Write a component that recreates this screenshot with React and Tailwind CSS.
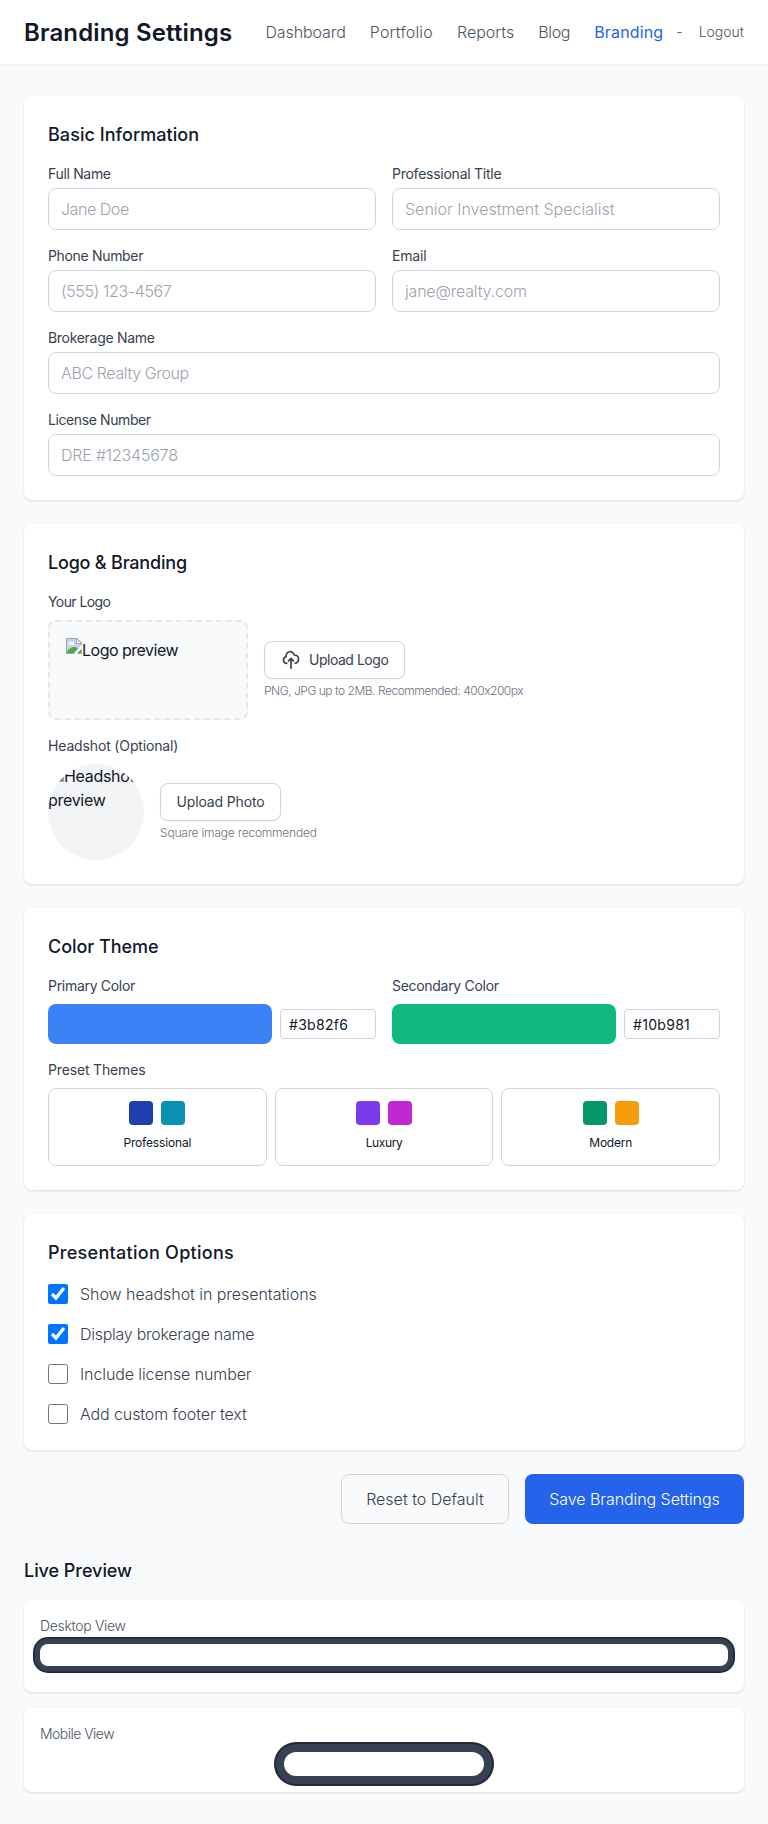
import React from 'react';

const field =
  "block w-full h-[42px] rounded-lg border border-[#d1d5db] bg-white px-3 text-base font-[350] text-[#111827] placeholder:text-[#9ca3af] outline-none";

function BrokenImage({ className }) {
  return (
    <svg viewBox="0 0 16 16" className={className} aria-hidden="true">
      <path d="M0.5 0.5H11L15.5 5V15.5H0.5Z" fill="#c4d4f7" stroke="#a3a3a3" />
      <path d="M2.5 6.5a1.6 1.6 0 0 1 1.4-1.9a1.7 1.7 0 0 1 3.1 0a1.2 1.2 0 0 1 .9 1.9Z" fill="#fff" />
      <path d="M1 15V13.6C3 10.600 5.500 9 8 9C9.800 9 11 9.700 11.800 10.600L8 15Z" fill="#55a83b" />
      <path d="M15 7.500L8 16H11L16 10.500V7.500Z" fill="#fff" />
      <path d="M11.500 15L15 11.500V15Z" fill="#55a83b" />
      <path d="M10.500 0.500V5.500H15.500Z" fill="#f3f3f3" stroke="#a3a3a3" strokeWidth=".9" />
    </svg>
  );
}

function Card({ title, titleClass = "", children }) {
  return (
    <section className="rounded-lg bg-white p-6 shadow-sm">
      <h2 className={`mb-[15px] pt-px text-lg/7 font-[540] text-[#111827] ${titleClass}`}>{title}</h2>
      {children}
    </section>
  );
}

function Label({ className = "", children }) {
  return <label className={`block text-sm/5 font-[420] text-[#374151] ${className}`}>{children}</label>;
}

function Field({ label, labelClass, placeholder, inputClass, wide }) {
  return (
    <div className={wide ? "col-span-2" : ""}>
      <Label className={`mb-1 ${labelClass}`}>{label}</Label>
      <input type="text" placeholder={placeholder} className={`${field} ${inputClass}`} />
    </div>
  );
}

function ColorField({ label, labelClass, swatchClass, value, valueClass }) {
  return (
    <div>
      <Label className={`mb-2 ${labelClass}`}>{label}</Label>
      <div className="flex items-center gap-2">
        <div className={`h-10 flex-1 rounded-lg ${swatchClass}`} />
        <input
          type="text"
          defaultValue={value}
          className={`h-[30px] w-24 rounded border border-[#d1d5db] bg-white px-2 text-sm font-[370] text-[#111827] outline-none ${valueClass}`}
        />
      </div>
    </div>
  );
}

function Preset({ name, nameClass, first, second }) {
  return (
    <button className="rounded-lg border border-[#d1d5db] p-3">
      <div className="mb-2 flex justify-center gap-2">
        <div className={`size-6 rounded ${first}`} />
        <div className={`size-6 rounded ${second}`} />
      </div>
      <p className={`text-xs/5 font-[400] text-[#111827] ${nameClass}`}>{name}</p>
    </button>
  );
}

function Option({ label, labelClass, checked }) {
  return (
    <label className="flex items-center gap-3">
      <input type="checkbox" defaultChecked={checked} className="size-5" />
      <span className={`text-base/6 font-[350] text-[#374151] ${labelClass}`}>{label}</span>
    </label>
  );
}

export default function App() {
  return (
    <div className="min-h-screen bg-[#f9fafb] font-['Inter',sans-serif] text-[#111827]">
      <header className="flex h-16 items-center justify-between bg-white px-6 shadow-xs">
        <h1 className="pt-0.5 text-2xl/8 font-[620] tracking-[0.15px] whitespace-nowrap">Branding Settings</h1>
        <div className="flex items-center whitespace-nowrap font-[350] text-[#4b5563]">
          <nav className="flex gap-6">
            <a className="tracking-[-0.09px]">Dashboard</a>
            <a className="tracking-[0.2px]">Portfolio</a>
            <a className="tracking-[0px]">Reports</a>
            <a className="tracking-[-0.3px]">Blog</a>
            <a className="font-[410] tracking-[0.15px] text-[#2563eb]">Branding</a>
          </nav>
          <span className="ml-[13px] text-sm">-</span>
          <button className="ml-4 text-sm">Logout</button>
        </div>
      </header>

      <main className="px-6 pt-8 pb-8">
        <div className="flex flex-col gap-6">
          <Card title="Basic Information" titleClass="tracking-[0.05px]">
            <div className="grid grid-cols-2 gap-4">
              <Field label="Full Name" labelClass="tracking-[-0.33px]" placeholder="Jane Doe" inputClass="tracking-[-0.45px]" />
              <Field label="Professional Title" labelClass="tracking-[-0.25px]" placeholder="Senior Investment Specialist" inputClass="" />
              <Field label="Phone Number" labelClass="tracking-[-0.33px]" placeholder="(555) 123-4567" inputClass="tracking-[-0.35px]" />
              <Field label="Email" labelClass="tracking-[-0.2px]" placeholder="jane@realty.com" inputClass="tracking-[-0.2px]" />
              <Field label="Brokerage Name" labelClass="tracking-[-0.3px]" placeholder="ABC Realty Group" inputClass="tracking-[-0.38px]" wide />
              <Field label="License Number" labelClass="tracking-[-0.4px]" placeholder="DRE #12345678" inputClass="tracking-[-0.2px]" wide />
            </div>
          </Card>

          <Card title="Logo & Branding" titleClass="tracking-[-0.2px]">
            <Label className="mb-2 tracking-[-0.58px]">Your Logo</Label>
            <div className="mb-4 flex items-center gap-4">
              <div className="flex h-[100px] w-[200px] items-start rounded-lg border-2 border-dashed border-[#e5e7eb] bg-[#f9fafb] p-4">
                <BrokenImage className="size-4" />
                <span className="text-base/6 font-[380] tracking-[-0.5px]">Logo preview</span>
              </div>
              <div>
                <button className="flex h-[38px] w-[141px] items-center rounded-lg border border-[#d1d5db] bg-white px-4 text-sm font-[420] whitespace-nowrap text-[#374151] shadow-xs">
                  <svg className="mr-2 size-5 shrink-0" fill="none" stroke="currentColor" viewBox="0 0 24 24">
                    <path
                      strokeLinecap="round"
                      strokeLinejoin="round"
                      strokeWidth="2"
                      d="M7 16a4 4 0 01-.88-7.903A5 5 0 1115.900 6L16 6a5 5 0 011 9.900M15 13l-3-3m0 0l-3 3m3-3v12"
                    />
                  </svg>
                  <span className="tracking-[-0.48px]">Upload Logo</span>
                </button>
                <p className="mt-1 text-xs/4 font-[350] tracking-[-0.47px] text-[#6b7280] [font-feature-settings:'calt'_0]">
                  PNG, JPG up to 2MB. Recommended: 400x200px
                </p>
              </div>
            </div>
            <Label className="mb-2 tracking-[-0.15px]">Headshot (Optional)</Label>
            <div className="flex items-center gap-4">
              <div className="size-24 overflow-hidden rounded-full bg-[#f3f4f6] text-base/6">
                <BrokenImage className="inline size-4 align-baseline" />
                <span className="font-[380] tracking-[-0.3px]">Headshot preview</span>
              </div>
              <div>
                <button className="h-[38px] w-[121px] rounded-lg border border-[#d1d5db] bg-white text-sm font-[420] tracking-[-0.15px] text-[#374151] shadow-xs">
                  Upload Photo
                </button>
                <p className="mt-1 text-xs/4 font-[350] tracking-[-0.2px] text-[#6b7280]">Square image recommended</p>
              </div>
            </div>
          </Card>

          <Card title="Color Theme" titleClass="tracking-[-0.05px]">
            <div className="mb-4 grid grid-cols-2 gap-4">
              <ColorField label="Primary Color" labelClass="tracking-[-0.3px]" swatchClass="bg-[#3b82f6]" value="#3b82f6" valueClass="tracking-[0.3px]" />
              <ColorField label="Secondary Color" labelClass="tracking-[-0.3px]" swatchClass="bg-[#10b981]" value="#10b981" valueClass="tracking-[0.3px]" />
            </div>
            <Label className="mb-2 tracking-[-0.16px]">Preset Themes</Label>
            <div className="grid grid-cols-3 gap-2">
              <Preset name="Professional" nameClass="tracking-[-0.17px]" first="bg-[#1e40af]" second="bg-[#0891b2]" />
              <Preset name="Luxury" nameClass="tracking-[-0.4px]" first="bg-[#7c3aed]" second="bg-[#c026d3]" />
              <Preset name="Modern" nameClass="tracking-[-0.25px]" first="bg-[#059669]" second="bg-[#f59e0b]" />
            </div>
          </Card>

          <Card title="Presentation Options" titleClass="tracking-[0.28px]">
            <div className="flex flex-col gap-4">
              <Option label="Show headshot in presentations" labelClass="tracking-[-0.05px]" checked />
              <Option label="Display brokerage name" labelClass="tracking-[-0.27px]" checked />
              <Option label="Include license number" labelClass="tracking-[-0.1px]" />
              <Option label="Add custom footer text" labelClass="tracking-[-0.11px]" />
            </div>
          </Card>

          <div className="flex justify-end gap-4">
            <button className="h-[50px] w-[168px] rounded-lg border border-[#d1d5db] font-[350] text-[#374151]">Reset to Default</button>
            <button className="h-[50px] w-[219px] rounded-lg bg-[#2563eb] font-[350] tracking-[-0.07px] text-white">Save Branding Settings</button>
          </div>
        </div>

        <section className="mt-8">
          <h2 className="mb-[15px] pt-px text-lg/7 font-[540] tracking-[-0.05px]">Live Preview</h2>
          <div className="h-[92.400px] rounded-lg bg-white p-4 shadow-sm">
            <p className="mb-2 text-sm/5 font-[350] tracking-[-0.33px] text-[#4b5563]">Desktop View</p>
            <div className="h-[22.400px] rounded-lg bg-white shadow-[0_0_0_5.500px_#374151,0_0_0_7px_#1f2937]" />
          </div>
          <div className="mt-4 h-[84px] rounded-lg bg-white p-4 shadow-sm">
            <p className="mb-2 text-sm/5 font-[350] tracking-[-0.53px] text-[#4b5563]">Mobile View</p>
            <div className="mx-auto h-6 w-[200px] rounded-xl bg-white shadow-[0_0_0_8px_#374151,0_0_0_10px_#1f2937]" />
          </div>
        </section>
      </main>
    </div>
  );
}
